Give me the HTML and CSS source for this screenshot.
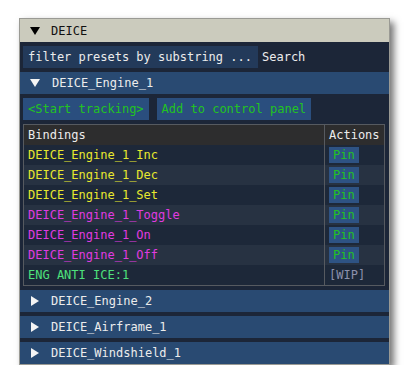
FILE: index.html
```html
<!DOCTYPE html>
<html>
<head>
<meta charset="utf-8">
<link rel="stylesheet" href="styles.css">
</head>
<body>
<div class="window">
  <div class="titlebar"><span class="tri tri-down dark"></span><span>DEICE</span></div>
  <div class="content">
    <div class="filter-row">
      <div class="filter">filter presets by substring ...</div>
      <span class="search">Search</span>
    </div>
    <div class="header open"><span class="tri tri-down"></span><span>DEICE_Engine_1</span></div>
    <div class="buttons">
      <div class="btn">&lt;Start tracking&gt;</div>
      <div class="btn">Add to control panel</div>
    </div>
    <div class="table">
      <div class="row head"><div class="c1">Bindings</div><div class="c2">Actions</div></div>
      <div class="row"><div class="c1 yellow">DEICE_Engine_1_Inc</div><div class="c2"><span class="pin">Pin</span></div></div>
      <div class="row alt"><div class="c1 yellow">DEICE_Engine_1_Dec</div><div class="c2"><span class="pin">Pin</span></div></div>
      <div class="row"><div class="c1 yellow">DEICE_Engine_1_Set</div><div class="c2"><span class="pin">Pin</span></div></div>
      <div class="row alt"><div class="c1 magenta">DEICE_Engine_1_Toggle</div><div class="c2"><span class="pin">Pin</span></div></div>
      <div class="row"><div class="c1 magenta">DEICE_Engine_1_On</div><div class="c2"><span class="pin">Pin</span></div></div>
      <div class="row alt"><div class="c1 magenta">DEICE_Engine_1_Off</div><div class="c2"><span class="pin">Pin</span></div></div>
      <div class="row"><div class="c1 mint">ENG ANTI ICE:1</div><div class="c2 wip">[WIP]</div></div>
    </div>
    <div class="header"><span class="tri tri-right"></span><span>DEICE_Engine_2</span></div>
    <div class="header"><span class="tri tri-right"></span><span>DEICE_Airframe_1</span></div>
    <div class="header"><span class="tri tri-right"></span><span>DEICE_Windshield_1</span></div>
  </div>
</div>
</body>
</html>
```
FILE: styles.css
```css
html, body {
  margin: 0;
  padding: 0;
  background: #ffffff;
}
body {
  font-family: "DejaVu Sans Mono", "Liberation Mono", monospace;
  font-size: 12px;
  color: #e8e8ea;
}
.window {
  margin: 18px 0 0 19px;
  width: 369px;
  border: 1px solid #9a9a94;
  background: #1c2638;
  box-shadow: 4px 4px 7px rgba(0, 0, 0, 0.55);
}
.titlebar {
  height: 23px;
  background: #cbcbbd;
  color: #111;
  display: flex;
  align-items: center;
  padding-left: 10px;
  gap: 11px;
}
.content {
  display: flex;
  flex-direction: column;
  gap: 4px;
  padding: 4px 0 0 0;
}
.tri {
  display: inline-block;
  width: 0;
  height: 0;
}
.tri-down {
  border-left: 5px solid transparent;
  border-right: 5px solid transparent;
  border-top: 8px solid #f4f4f4;
}
.tri-down.dark {
  border-top-color: #000;
}
.tri-right {
  border-top: 5px solid transparent;
  border-bottom: 5px solid transparent;
  border-left: 8px solid #f4f4f4;
}
.filter-row {
  display: flex;
  align-items: center;
  padding-left: 3px;
  gap: 4px;
}
.filter {
  width: 230px;
  height: 22px;
  line-height: 22px;
  padding-left: 5px;
  background: #233a5a;
  color: #ececec;
}
.search {
  color: #ececec;
}
.header {
  height: 22px;
  background: #294a72;
  display: flex;
  align-items: center;
  padding-left: 10px;
  gap: 12px;
  color: #ececec;
}
.header .tri-right {
  margin-left: 1px;
}
.buttons {
  display: flex;
  gap: 8px;
  padding-left: 3px;
}
.btn {
  height: 22px;
  line-height: 22px;
  padding: 0 5px;
  background: #2a4e7e;
  color: #22c322;
}
.table {
  margin: 0 4px 0 3px;
  border: 1px solid #565a60;
}
.row {
  display: flex;
  height: 20px;
  line-height: 20px;
  background: #1d2839;
}
.row.alt {
  background: #273242;
}
.row.head {
  background: #2d2d2e;
  color: #ececec;
}
.c1 {
  flex: 1;
  padding-left: 4px;
}
.c2 {
  width: 55px;
  padding-left: 4px;
  border-left: 1px solid #565a60;
  display: flex;
  align-items: center;
}
.pin {
  display: inline-block;
  height: 16px;
  line-height: 16px;
  padding: 0 4px;
  background: #2e5384;
  color: #22c322;
}
.yellow { color: #e8e82e; }
.magenta { color: #e03be0; }
.mint { color: #4ee07c; }
.wip { color: #8c90ac; }
```
